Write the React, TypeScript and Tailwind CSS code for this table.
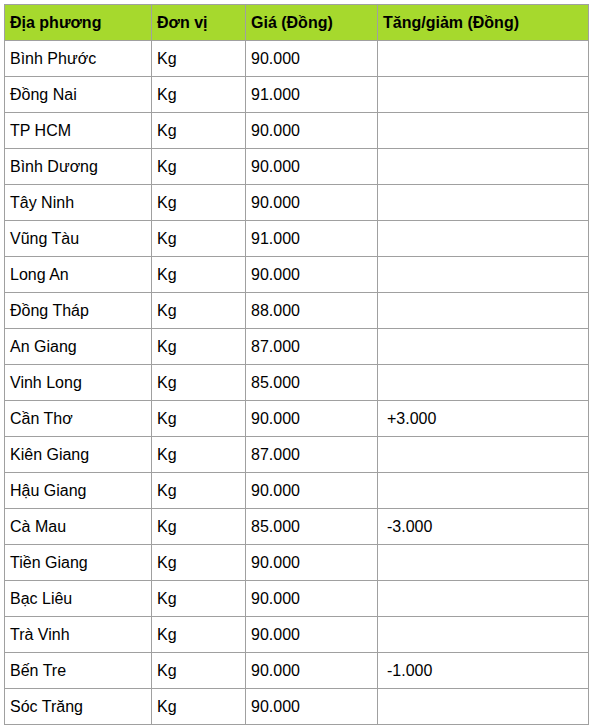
import React from 'react';

// Bảng giá theo địa phương
const rows: [string, string][] = [
  ['Bình Phước', '90.000'],
  ['Đồng Nai', '91.000'],
  ['TP HCM', '90.000'],
  ['Bình Dương', '90.000'],
  ['Tây Ninh', '90.000'],
  ['Vũng Tàu', '91.000'],
  ['Long An', '90.000'],
  ['Đồng Tháp', '88.000'],
  ['An Giang', '87.000'],
  ['Vinh Long', '85.000'],
  ['Cần Thơ', '90.000'],
  ['Kiên Giang', '87.000'],
  ['Hậu Giang', '90.000'],
  ['Cà Mau', '85.000'],
  ['Tiền Giang', '90.000'],
  ['Bạc Liêu', '90.000'],
  ['Trà Vinh', '90.000'],
  ['Bến Tre', '90.000'],
  ['Sóc Trăng', '90.000'],
];

const changes: Record<string, string> = {
  'Cần Thơ': '+3.000',
  'Cà Mau': '-3.000',
  'Bến Tre': '-1.000',
};

const cell = 'border border-[#a0a0a0] px-[5px] h-[36px] align-middle text-left';

export default function App() {
  return (
    <div className="bg-white p-[4px] font-['Liberation_Sans',Arial,sans-serif] text-[16px] text-black">
      <table className="border-collapse table-fixed w-[584px]">
        <colgroup>
          <col className="w-[147px]" />
          <col className="w-[94px]" />
          <col className="w-[132px]" />
          <col className="w-[211px]" />
        </colgroup>
        <thead>
          <tr className="bg-[#a6d92d]">
            <th className={`${cell} font-bold`}>Địa phương</th>
            <th className={`${cell} font-bold`}>Đơn vị</th>
            <th className={`${cell} font-bold`}>Giá (Đồng)</th>
            <th className={`${cell} font-bold`}>Tăng/giảm (Đồng)</th>
          </tr>
        </thead>
        <tbody>
          {rows.map(([name, price]) => (
            <tr key={name}>
              <td className={cell}>{name}</td>
              <td className={cell}>Kg</td>
              <td className={cell}>{price}</td>
              <td className={`${cell} pl-[9px]`}>{changes[name] || ''}</td>
            </tr>
          ))}
        </tbody>
      </table>
    </div>
  );
}
